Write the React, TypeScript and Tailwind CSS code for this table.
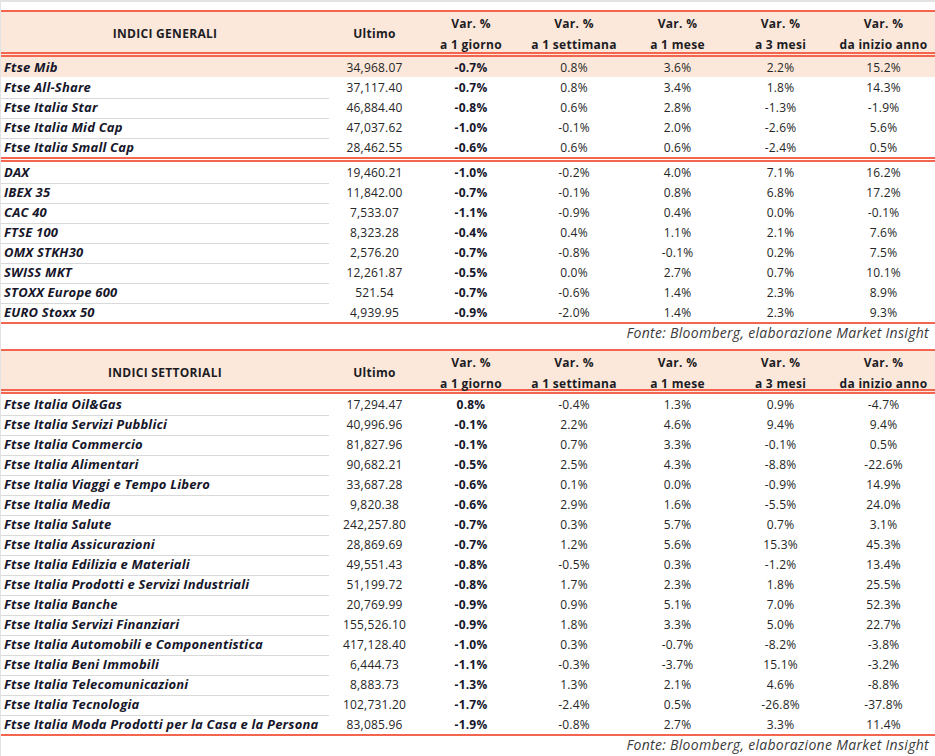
type Row = [string, string, string, string, string, string, string];

const generali: Row[] = [
  ["Ftse Mib", "34,968.07", "-0.7%", "0.8%", "3.6%", "2.2%", "15.2%"],
  ["Ftse All-Share", "37,117.40", "-0.7%", "0.8%", "3.4%", "1.8%", "14.3%"],
  ["Ftse Italia Star", "46,884.40", "-0.8%", "0.6%", "2.8%", "-1.3%", "-1.9%"],
  ["Ftse Italia Mid Cap", "47,037.62", "-1.0%", "-0.1%", "2.0%", "-2.6%", "5.6%"],
  ["Ftse Italia Small Cap", "28,462.55", "-0.6%", "0.6%", "0.6%", "-2.4%", "0.5%"],
];

const esteri: Row[] = [
  ["DAX", "19,460.21", "-1.0%", "-0.2%", "4.0%", "7.1%", "16.2%"],
  ["IBEX 35", "11,842.00", "-0.7%", "-0.1%", "0.8%", "6.8%", "17.2%"],
  ["CAC 40", "7,533.07", "-1.1%", "-0.9%", "0.4%", "0.0%", "-0.1%"],
  ["FTSE 100", "8,323.28", "-0.4%", "0.4%", "1.1%", "2.1%", "7.6%"],
  ["OMX STKH30", "2,576.20", "-0.7%", "-0.8%", "-0.1%", "0.2%", "7.5%"],
  ["SWISS MKT", "12,261.87", "-0.5%", "0.0%", "2.7%", "0.7%", "10.1%"],
  ["STOXX Europe 600", "521.54", "-0.7%", "-0.6%", "1.4%", "2.3%", "8.9%"],
  ["EURO Stoxx 50", "4,939.95", "-0.9%", "-2.0%", "1.4%", "2.3%", "9.3%"],
];

const settoriali: Row[] = [
  ["Ftse Italia Oil&Gas", "17,294.47", "0.8%", "-0.4%", "1.3%", "0.9%", "-4.7%"],
  ["Ftse Italia Servizi Pubblici", "40,996.96", "-0.1%", "2.2%", "4.6%", "9.4%", "9.4%"],
  ["Ftse Italia Commercio", "81,827.96", "-0.1%", "0.7%", "3.3%", "-0.1%", "0.5%"],
  ["Ftse Italia Alimentari", "90,682.21", "-0.5%", "2.5%", "4.3%", "-8.8%", "-22.6%"],
  ["Ftse Italia Viaggi e Tempo Libero", "33,687.28", "-0.6%", "0.1%", "0.0%", "-0.9%", "14.9%"],
  ["Ftse Italia Media", "9,820.38", "-0.6%", "2.9%", "1.6%", "-5.5%", "24.0%"],
  ["Ftse Italia Salute", "242,257.80", "-0.7%", "0.3%", "5.7%", "0.7%", "3.1%"],
  ["Ftse Italia Assicurazioni", "28,869.69", "-0.7%", "1.2%", "5.6%", "15.3%", "45.3%"],
  ["Ftse Italia Edilizia e Materiali", "49,551.43", "-0.8%", "-0.5%", "0.3%", "-1.2%", "13.4%"],
  ["Ftse Italia Prodotti e Servizi Industriali", "51,199.72", "-0.8%", "1.7%", "2.3%", "1.8%", "25.5%"],
  ["Ftse Italia Banche", "20,769.99", "-0.9%", "0.9%", "5.1%", "7.0%", "52.3%"],
  ["Ftse Italia Servizi Finanziari", "155,526.10", "-0.9%", "1.8%", "3.3%", "5.0%", "22.7%"],
  ["Ftse Italia Automobili e Componentistica", "417,128.40", "-1.0%", "0.3%", "-0.7%", "-8.2%", "-3.8%"],
  ["Ftse Italia Beni Immobili", "6,444.73", "-1.1%", "-0.3%", "-3.7%", "15.1%", "-3.2%"],
  ["Ftse Italia Telecomunicazioni", "8,883.73", "-1.3%", "1.3%", "2.1%", "4.6%", "-8.8%"],
  ["Ftse Italia Tecnologia", "102,731.20", "-1.7%", "-2.4%", "0.5%", "-26.8%", "-37.8%"],
  ["Ftse Italia Moda Prodotti per la Casa e la Persona", "83,085.96", "-1.9%", "-0.8%", "2.7%", "3.3%", "11.4%"],
];

const periods = ["a 1 giorno", "a 1 settimana", "a 1 mese", "a 3 mesi", "da inizio anno"];

const grid = "grid grid-cols-[328px_91px_102px_104px_103px_103px_103px]";

function Header({ title, tall }: { title: string; tall?: boolean }) {
  return (
    <div
      className={`${grid} ${tall ? "h-[47px]" : "h-[45px]"} border-t-2 border-b-[5px] border-double border-[#f3654e] bg-[#fce8da] text-[12px] font-bold tracking-[0.3px] text-[#1c1c24]`}
      style={{ borderTopStyle: "solid" }}
    >
      <div className="flex items-center justify-center">{title}</div>
      <div className="flex items-center justify-center">Ultimo</div>
      {periods.map((p) => (
        <div key={p} className="flex flex-col items-center justify-center pt-px leading-[21px]">
          <span>Var. %</span>
          <span>{p}</span>
        </div>
      ))}
    </div>
  );
}

function DataRow({ row, highlight, last }: { row: Row; highlight?: boolean; last?: boolean }) {
  const [label, ultimo, giorno, ...rest] = row;
  return (
    <div className={`${grid} h-5 text-[12px] tracking-[0.2px] ${highlight ? "bg-[#fce8da]" : ""}`}>
      <div
        className={`flex items-center pl-[3px] pt-px text-[13px] font-bold italic text-[#16162a] ${
          highlight || last ? "" : "border-b border-[#d9d9d9]"
        }`}
      >
        {label}
      </div>
      <div className="flex items-center justify-center pt-px text-[#262626]">{ultimo}</div>
      <div className="flex items-center justify-center pt-px font-bold text-[#16162a]">{giorno}</div>
      {rest.map((v, i) => (
        <div key={i} className="flex items-center justify-center pt-px text-[#262626]">
          {v}
        </div>
      ))}
    </div>
  );
}

function Fonte() {
  return (
    <div className="h-[18px] pr-[6px] text-right text-[14px] italic leading-[18px] tracking-[0.3px] text-[#3a3a3a]">
      Fonte: Bloomberg, elaborazione Market Insight
    </div>
  );
}

export default function App() {
  return (
    <div className="h-[756px] w-[935px] overflow-hidden border-l border-t-2 border-[#e3e3e3] bg-white pt-2 font-['Open_Sans',sans-serif]">
      <Header title="INDICI GENERALI" tall />
      {generali.map((r, i) => (
        <DataRow key={r[0]} row={r} highlight={i === 0} last={i === generali.length - 1} />
      ))}
      <div className="h-[5px] border-y-2 border-[#f3654e]" />
      {esteri.map((r, i) => (
        <DataRow key={r[0]} row={r} last={i === esteri.length - 1} />
      ))}
      <div className="border-t-2 border-[#f3654e]" />
      <Fonte />
      <div className="h-[7px]" />
      <Header title="INDICI SETTORIALI" />
      {settoriali.map((r, i) => (
        <DataRow key={r[0]} row={r} last={i === settoriali.length - 1} />
      ))}
      <div className="border-t-2 border-[#f3654e]" />
      <Fonte />
    </div>
  );
}
